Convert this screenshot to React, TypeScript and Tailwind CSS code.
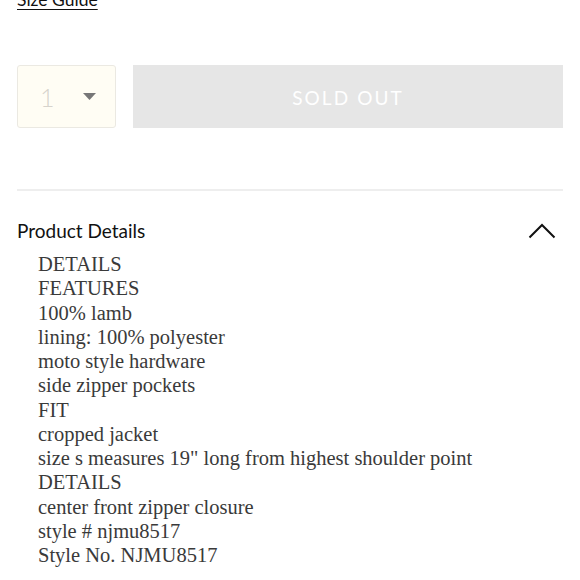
import React from "react";

const lines = [
  "DETAILS",
  "FEATURES",
  "100% lamb",
  "lining: 100% polyester",
  "moto style hardware",
  "side zipper pockets",
  "FIT",
  "cropped jacket",
  'size s measures 19" long from highest shoulder point',
  "DETAILS",
  "center front zipper closure",
  "style # njmu8517",
  "Style No. NJMU8517",
];

export default function App() {
  return (
    <div className="w-[580px] h-[580px] overflow-hidden bg-white relative">
      <div className="px-[17px] mt-[-11px]">
        <div className="h-[22px] flex items-center">
          <span
            className="text-[17.5px] text-[#111] underline underline-offset-[3px] leading-none"
            style={{ fontFamily: "Lato, 'Open Sans', sans-serif" }}
          >
            Size Guide
          </span>
        </div>
        <div className="flex gap-[17px] mt-[54px] h-[63px]">
          <div className="w-[99px] h-full bg-[#fffdf4] border border-[#ebe9e2] rounded-[3px] flex items-center pl-[22px] pr-[19px] justify-between">
            <span
              className="text-[25px] text-[#d6d3cc] font-light pt-[2px]"
              style={{ fontFamily: "Lato, sans-serif" }}
            >
              1
            </span>
            <svg width="13" height="7" viewBox="0 0 13 7">
              <path d="M0 0 L13 0 L6.5 7 Z" fill="#777" />
            </svg>
          </div>
          <div className="flex-1 h-full bg-[#e6e6e6] flex items-center justify-center pt-[3px]">
            <span
              className="text-white text-[19px] tracking-[0.11em]"
              style={{ fontFamily: "Lato, sans-serif" }}
            >
              SOLD OUT
            </span>
          </div>
        </div>
        <div className="mt-[61px] h-[2px] bg-[#eeeeee]" />
        <div className="flex items-center justify-between h-[40px] mt-[20px]">
          <span
            className="text-[19px] text-[#111]"
            style={{ fontFamily: "Lato, 'Open Sans', sans-serif" }}
          >
            Product Details
          </span>
          <svg width="28" height="16" viewBox="0 0 28 16" className="mr-[7px]">
            <path d="M1.5 14.5 L14 2 L26.5 14.5" fill="none" stroke="#111" strokeWidth="2" />
          </svg>
        </div>
        <div
          className="pl-[21px] mt-[1px] text-[#3a3a3a] text-[20.5px] leading-[24.25px]"
          style={{ fontFamily: "'Liberation Serif', 'DejaVu Serif', serif" }}
        >
          {lines.map((l, i) => (
            <div key={i}>{l}</div>
          ))}
        </div>
      </div>
    </div>
  );
}
